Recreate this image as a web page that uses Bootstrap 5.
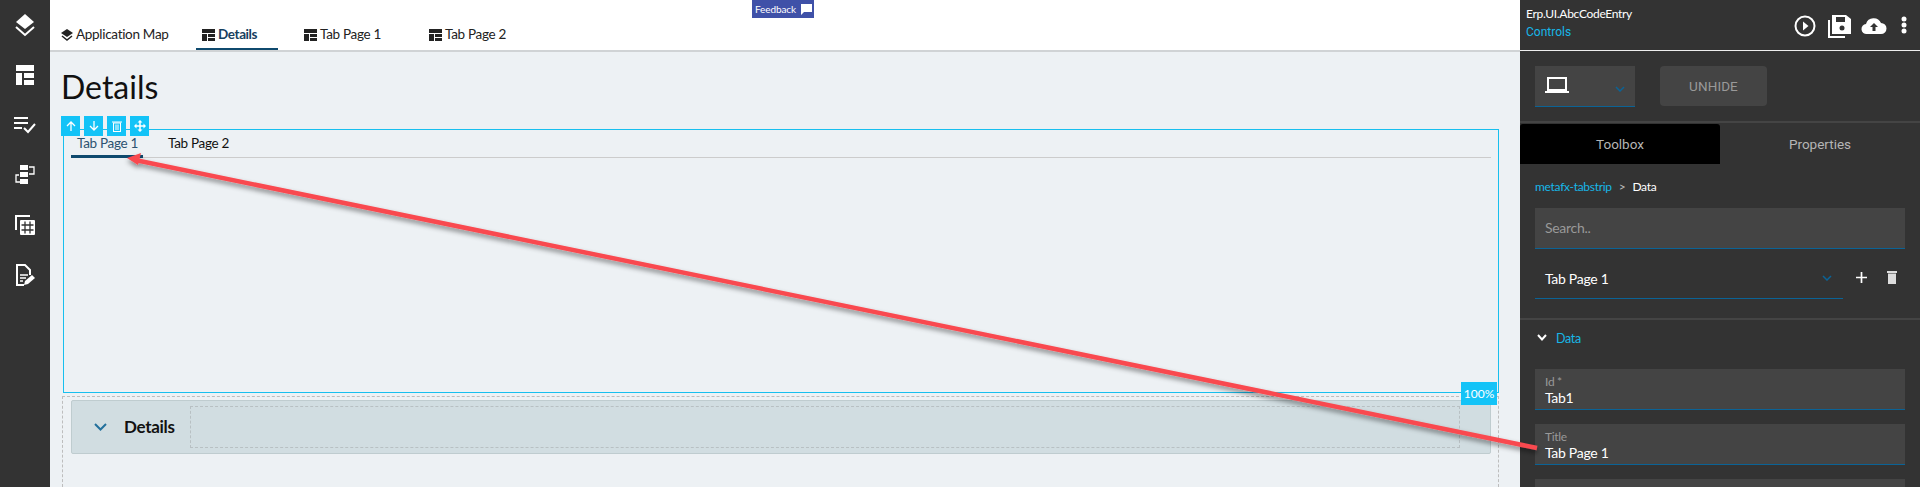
<!DOCTYPE html>
<html lang="en">
<head>
<meta charset="utf-8">
<title>Details</title>
<link rel="stylesheet" href="https://cdn.jsdelivr.net/npm/bootstrap@5.3.0/dist/css/bootstrap.min.css">
<style>
html,body{height:487px;overflow:hidden}
body{font-family:"Lato","Liberation Sans",sans-serif;font-size:13px;color:#111;background:#edf1f4}
.shell{height:487px;overflow:hidden}
.rail{width:50px;flex:none;background:#333}
.rail-ico{height:50px;display:flex;justify-content:center;align-items:center}
.work{flex:1 1 auto;min-width:0;background:#edf1f4;position:relative;height:487px;overflow:hidden}
.topbar{height:52px;background:#fff;border-bottom:2px solid #d0d3d5;padding-left:11px}
.top-tab{height:50px;display:flex;align-items:flex-start;padding-top:26px;gap:3px;font-size:13.5px;letter-spacing:-.3px;line-height:17px;color:#222;white-space:nowrap}
.top-tab svg{margin-top:3px}
.top-tab.t1{width:135px}
.top-tab.t2{width:82px;padding-left:6px;color:#16405f;font-weight:700;letter-spacing:-.4px;border-bottom:2px solid #0f4a6e;height:50px}
.top-tab.t3{width:125px;margin-left:26px}
.feedback{position:absolute;left:702px;top:0;width:62px;height:18px;background:#3f51a8;color:#fff;font-size:10px;letter-spacing:-.1px;line-height:17px;padding-left:3px;display:flex;align-items:center;gap:5px;white-space:nowrap}
.feedback svg{flex:none}
.page-body{padding:0 21px 0 13px}
.page-ttl{font-size:32px;font-weight:400;line-height:40px;margin:15px 0 0 -2px;color:#111}
.sel-box{position:relative;margin-top:22px;height:264px;border:1px solid #17bfee;padding:0 7px}
.tool-row{position:absolute;left:-3px;top:-14px;gap:4px}
.tool-btn{width:19px;height:20px;background:#13c3f7;display:flex;align-items:center;justify-content:center}
.inner-tabs{height:28px;border-bottom:1px solid #ccc}
.in-tab{font-size:13.5px;letter-spacing:-.3px;line-height:17px;padding-top:5px;height:28px;white-space:nowrap}
.in-tab.on{width:72px;padding-left:6px;color:#2c5270;border-bottom:3px solid #0f4a6e;margin-right:25px}
.pct{position:absolute;right:1px;bottom:-13px;width:36px;height:23px;background:#13c3f7;color:#fff;font-size:12px;line-height:23px;text-align:center;z-index:2}
.dash-box{margin:3px 0 0 -1px;border:1px dashed #bdbdbd;border-bottom:0;height:91px;padding:3px 7px 0 8px}
.acc{height:54px;background:#d1dde1;border:1px solid #bfcccf;border-radius:2px;padding-left:22px}
.acc-ttl{font-size:17px;font-weight:700;letter-spacing:-.3px;color:#111;margin-left:17px;width:66px}
.acc-slot{width:1270px;height:42px;border:1px dashed #b8c0c3}
.panel{width:400px;flex:none;background:#333;color:#fff;position:relative;letter-spacing:-.3px;height:487px;overflow:hidden}
.p-head{height:51px;border-bottom:1px solid #eee;padding:0 0 0 6px}
.p-name{font-size:12px;line-height:18px;padding-top:5px}
.p-ctl{font-size:12px;line-height:18px;color:#17b7e8;font-family:Roboto,sans-serif;letter-spacing:0}
.p-icons{margin-left:auto}
.ic-play{margin:14px 11px 0 0}
.ic-save{margin:14px 9px 0 0}
.ic-cloud{margin:16px 12px 0 0}
.ic-dots{margin:16px 11px 0 0}
.p-bar{height:72px;border-bottom:2px solid #444;padding:15px 0 0 15px;gap:25px}
.dd{width:100px;height:41px;background:#444;border-bottom:1px solid #0b6396;padding:10px 10px 0 10px}
.dd-chev{margin-top:10px}
.unhide{width:107px;height:40px;background:#444;border-radius:4px;color:#999;font:13.5px Roboto,sans-serif;display:flex;align-items:center;justify-content:center;letter-spacing:.1px}
.p-tabs{height:41px;margin-top:1px}
.p-tab{width:200px;height:40px;text-align:center;color:#b5b5b5;font:13.5px/40px Roboto,sans-serif;letter-spacing:0}
.p-tab.on{background:#000;border-radius:3px 3px 0 0}
.crumb{font-size:12px;line-height:16px;padding:14px 0 0 15px;height:43px}
.crumb .c1{color:#17b7e8}
.crumb .c2{color:#bbb;margin:0 7px}
.search{margin-left:15px;width:370px;height:41px;background:#444;border-bottom:1px solid #0b6396;color:#999;font-size:14px;line-height:40px;padding-left:10px}
.tab-sel{margin:9px 0 0 15px}
.tab-pick{width:308px;height:41px;border-bottom:1px solid #0b6396;padding:0 11px 0 10px;font-size:14px}
.pick-acts{gap:20px;margin-left:13px;height:41px;padding-bottom:3px}
.sec-sep{height:2px;background:#444;margin-top:19px}
.sec-row{padding:11px 0 0 17px;height:49px;gap:9px;color:#17b7e8;font-size:12.5px;line-height:16px}
.sec-chev{margin-top:3px}
.fld{margin:0 0 14px 15px;width:370px;height:41px;background:#444;border-bottom:1px solid #0b6396;padding:5px 10px 0}
.fld-l{font-size:12px;line-height:15px;color:#999}
.fld-v{font-size:14px;line-height:18px;color:#fff}
.fld.bare{border-bottom:0;height:8px;margin-bottom:0;padding:0}
.arrow-layer{position:absolute;left:0;top:0;z-index:5;pointer-events:none}
</style>
</head>
<body>
<div class="shell d-flex">
  <nav class="rail d-flex flex-column">
    <div class="rail-ico"><svg width="24" height="26" viewBox="0 0 24 26"><path d="M12 2 3 10l9 7 9-7z" fill="#fff"/><path d="M3 15l9 8 9-8" fill="none" stroke="#fff" stroke-width="2"/></svg></div>
    <div class="rail-ico"><svg width="18" height="20" viewBox="0 0 18 20" fill="#fff"><rect width="18" height="6"/><rect y="8" width="6" height="12"/><rect x="8" y="8" width="10" height="5"/><rect x="8" y="15" width="10" height="5"/></svg></div>
    <div class="rail-ico"><svg width="22" height="18" viewBox="0 0 22 18"><path d="M0 2h14M0 7h14M0 12h8" stroke="#fff" stroke-width="2" fill="none"/><path d="M10 12l4 4 7-8" stroke="#fff" stroke-width="2" fill="none"/></svg></div>
    <div class="rail-ico"><svg width="20" height="20" viewBox="0 0 20 20"><g fill="#fff"><rect x="5" y="0" width="8" height="5"/><rect x="5" y="7" width="8" height="5"/><rect x="5" y="14" width="8" height="5"/></g><path d="M14 2h5v7h-5M4 10H1v7h4" fill="none" stroke="#fff" stroke-width="1.300"/></svg></div>
    <div class="rail-ico"><svg width="20" height="20" viewBox="0 0 20 20"><path d="M1 15V1h14" fill="none" stroke="#fff" stroke-width="2"/><rect x="5" y="5" width="15" height="15" rx="1" fill="#fff"/><path d="M10 6.500v12M15 6.500v12M6.500 10h12M6.500 15h12" stroke="#333" stroke-width="1.300"/></svg></div>
    <div class="rail-ico"><svg width="20" height="22" viewBox="0 0 20 22"><path d="M9 21H2V1h8l5 5v5" fill="none" stroke="#fff" stroke-width="2"/><path d="M5 11h8M5 14h6M5 17h3" stroke="#fff" stroke-width="1.500"/><path d="M9 21l1-4 7-6 3 3-7 6z" fill="#fff"/></svg></div>
  </nav>

  <main class="work">
    <div class="topbar d-flex">
      <div class="top-tab t1"><svg width="12" height="12" viewBox="0 0 12 12"><path d="M6 0 0 4l6 4 6-4z" fill="#222"/><path d="M1 7l5 4 5-4" fill="none" stroke="#222" stroke-width="1.500"/></svg><span>Application Map</span></div>
      <div class="top-tab t2"><svg width="13" height="12" viewBox="0 0 13 12" fill="#222"><rect width="13" height="4"/><rect y="5" width="5" height="7"/><rect x="6" y="5" width="7" height="3"/><rect x="6" y="9" width="7" height="3"/></svg><span>Details</span></div>
      <div class="top-tab t3"><svg width="13" height="12" viewBox="0 0 13 12" fill="#222"><rect width="13" height="4"/><rect y="5" width="5" height="7"/><rect x="6" y="5" width="7" height="3"/><rect x="6" y="9" width="7" height="3"/></svg><span>Tab Page 1</span></div>
      <div class="top-tab"><svg width="13" height="12" viewBox="0 0 13 12" fill="#222"><rect width="13" height="4"/><rect y="5" width="5" height="7"/><rect x="6" y="5" width="7" height="3"/><rect x="6" y="9" width="7" height="3"/></svg><span>Tab Page 2</span></div>
    </div>
    <div class="feedback"><span>Feedback</span><svg width="11" height="11" viewBox="0 0 11 11"><path d="M0 0h11v8H3L0 11z" fill="#fff"/></svg></div>

    <div class="page-body">
      <h1 class="page-ttl">Details</h1>
      <div class="sel-box">
        <div class="tool-row d-flex">
          <div class="tool-btn"><svg width="10" height="10" viewBox="0 0 10 10"><path d="M5 10V1M1 5l4-4 4 4" fill="none" stroke="#fff" stroke-width="1.300"/></svg></div>
          <div class="tool-btn"><svg width="10" height="10" viewBox="0 0 10 10"><path d="M5 0v9M1 5l4 4 4-4" fill="none" stroke="#fff" stroke-width="1.300"/></svg></div>
          <div class="tool-btn"><svg width="10" height="11" viewBox="0 0 10 11"><path d="M0 1h10" stroke="#fff"/><rect x="1.500" y="2" width="7" height="8.500" fill="none" stroke="#fff"/><path d="M4 3.500v5.500M6 3.500v5.500" stroke="#fff"/></svg></div>
          <div class="tool-btn"><svg width="12" height="12" viewBox="0 0 12 12" fill="#fff"><path d="M6 0l2.500 2.500h-5zM6 12l2.500-2.500h-5zM0 6l2.500-2.500v5zM12 6 9.500 3.500v5z"/><path d="M6 2v8M2 6h8" stroke="#fff" stroke-width="1.500"/></svg></div>
        </div>
        <div class="inner-tabs d-flex">
          <div class="in-tab on">Tab Page 1</div>
          <div class="in-tab">Tab Page 2</div>
        </div>
        <div class="pct">100%</div>
      </div>
      <div class="dash-box">
        <div class="acc d-flex align-items-center">
          <svg width="13" height="8" viewBox="0 0 13 8"><path d="M1 1l5.500 5.500L12 1" fill="none" stroke="#23709c" stroke-width="2"/></svg>
          <div class="acc-ttl">Details</div>
          <div class="acc-slot"></div>
        </div>
      </div>
    </div>
  </main>

  <aside class="panel">
    <div class="p-head d-flex">
      <div><div class="p-name">Erp.UI.AbcCodeEntry</div><div class="p-ctl">Controls</div></div>
      <div class="p-icons d-flex align-items-start">
        <svg class="ic-play" width="24" height="24" viewBox="0 0 24 24"><circle cx="12" cy="12" r="9.500" fill="none" stroke="#fff" stroke-width="2"/><path d="M10 7.500l5.500 4.500-5.500 4.500z" fill="#fff"/></svg>
        <svg class="ic-save" width="24" height="24" viewBox="0 0 24 24"><path d="M1 6v17h16" fill="none" stroke="#fff" stroke-width="2"/><path d="M4 1h14l5 4v15H4z" fill="#fff"/><rect x="8" y="3" width="9" height="5" fill="#333"/><circle cx="14" cy="14" r="2.500" fill="#333"/></svg>
        <svg class="ic-cloud" width="26" height="20" viewBox="0 0 26 20"><path d="M6 18a5 5 0 0 1-1-10 8 8 0 0 1 15-1 5.500 5.500 0 0 1 0 11z" fill="#fff"/><path d="M13 7l-4 4h2.500v4h3v-4H17z" fill="#333"/></svg>
        <svg class="ic-dots" width="10" height="18" viewBox="0 0 10 18" fill="#fff"><circle cx="5" cy="3" r="2.500"/><circle cx="5" cy="9" r="2.500"/><circle cx="5" cy="15" r="2.500"/></svg>
      </div>
    </div>
    <div class="p-bar d-flex">
      <div class="dd d-flex justify-content-between">
        <svg width="24" height="18" viewBox="0 0 24 18"><rect x="3" y="2" width="18" height="12" fill="none" stroke="#fff" stroke-width="2"/><rect y="15" width="24" height="2" fill="#fff"/></svg>
        <svg class="dd-chev" width="10" height="6" viewBox="0 0 10 6"><path d="M1 1l4 4 4-4" fill="none" stroke="#0b6396" stroke-width="1.500"/></svg>
      </div>
      <div class="unhide">UNHIDE</div>
    </div>
    <div class="p-tabs d-flex">
      <div class="p-tab on">Toolbox</div>
      <div class="p-tab">Properties</div>
    </div>
    <div class="crumb"><span class="c1">metafx-tabstrip</span><span class="c2">&gt;</span><span>Data</span></div>
    <div class="search">Search..</div>
    <div class="tab-sel d-flex align-items-start">
      <div class="tab-pick d-flex justify-content-between align-items-center"><span>Tab Page 1</span><svg width="10" height="6" viewBox="0 0 10 6"><path d="M1 1l4 4 4-4" fill="none" stroke="#0b6396" stroke-width="1.500"/></svg></div>
      <div class="pick-acts d-flex align-items-center">
        <svg width="11" height="11" viewBox="0 0 11 11"><path d="M5.500 0v11M0 5.500h11" stroke="#fff" stroke-width="1.700"/></svg>
        <svg width="10" height="13" viewBox="0 0 10 13" fill="#ddd"><rect width="10" height="2"/><rect x="1" y="2.500" width="8" height="10.500"/></svg>
      </div>
    </div>
    <div class="sec-sep"></div>
    <div class="sec-row d-flex">
      <svg class="sec-chev" width="10" height="8" viewBox="0 0 10 8"><path d="M1 1l4 4.500L9 1" fill="none" stroke="#fff" stroke-width="2"/></svg>
      <span>Data</span>
    </div>
    <div class="fld"><div class="fld-l">Id *</div><div class="fld-v">Tab1</div></div>
    <div class="fld"><div class="fld-l">Title</div><div class="fld-v">Tab Page 1</div></div>
    <div class="fld bare"></div>
  </aside>
</div>
<svg class="arrow-layer" width="1920" height="487" viewBox="0 0 1920 487">
  <defs><filter id="sh" x="-5%" y="-20%" width="110%" height="140%"><feDropShadow dx="0" dy="3" stdDeviation="2.500" flood-color="#000" flood-opacity=".45"/></filter></defs>
  <g filter="url(#sh)"><path d="M1537 448 135 160" stroke="#f94a50" stroke-width="4.500" fill="none"/><path d="M127 158l14-5-3 12z" fill="#f94a50"/></g>
</svg>
</body>
</html>
